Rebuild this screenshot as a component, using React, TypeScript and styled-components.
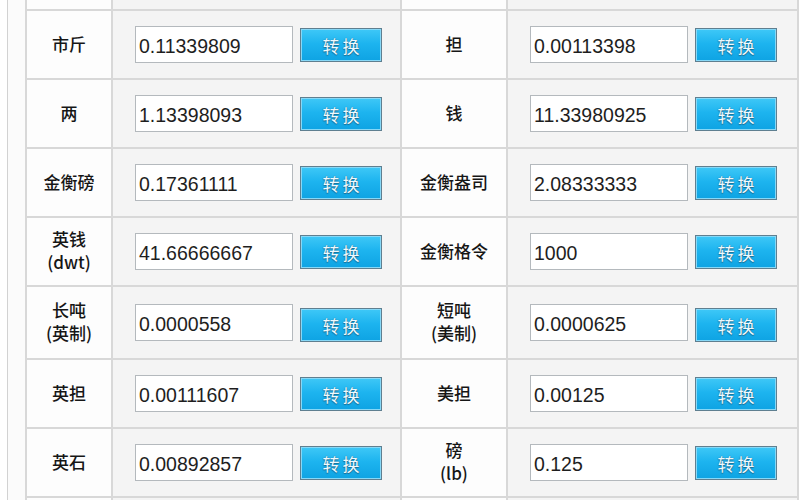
import { Fragment } from "react";
import styled, { createGlobalStyle } from "styled-components";

const GlobalStyle = createGlobalStyle`
  html, body {
    margin: 0;
    padding: 0;
    background: #ffffff;
  }
  body {
    font-family: "Noto Sans CJK SC", "Liberation Sans", sans-serif;
  }
`;

type Unit = { name: string[]; value: string };

const rows: { left: Unit; right: Unit }[] = [
  { left: { name: ["市斤"], value: "0.11339809" }, right: { name: ["担"], value: "0.00113398" } },
  { left: { name: ["两"], value: "1.13398093" }, right: { name: ["钱"], value: "11.33980925" } },
  { left: { name: ["金衡磅"], value: "0.17361111" }, right: { name: ["金衡盎司"], value: "2.08333333" } },
  { left: { name: ["英钱", "(dwt)"], value: "41.66666667" }, right: { name: ["金衡格令"], value: "1000" } },
  { left: { name: ["长吨", "(英制)"], value: "0.0000558" }, right: { name: ["短吨", "(美制)"], value: "0.0000625" } },
  { left: { name: ["英担"], value: "0.00111607" }, right: { name: ["美担"], value: "0.00125" } },
  { left: { name: ["英石"], value: "0.00892857" }, right: { name: ["磅", "(lb)"], value: "0.125" } },
];

const Page = styled.div`
  display: flex;
  width: 800px;
  height: 500px;
  overflow: hidden;
  background: #ffffff;
`;

const SideRule = styled.div`
  width: 7px;
  flex: none;
  border-right: 1px solid #d2d2d2;
`;

const Gutter = styled.div`
  width: 17px;
  flex: none;
  background: #fbfbfb;
`;

/* 9px sliver of the row above, seven full rows, then the start of the next one */
const Table = styled.div`
  display: grid;
  grid-template-columns: 84px 287px 104px 289px;
  grid-template-rows: 9px repeat(4, 67px) 71px 67px 67px 40px;
  gap: 2px;
  align-content: start;
  width: 770px;
  flex: none;
  background: #d8d8d8;
  border-left: 2px solid #d8d8d8;
  border-right: 2px solid #d8d8d8;
`;

const LabelCell = styled.div`
  display: flex;
  flex-direction: column;
  align-items: center;
  justify-content: center;
  padding-bottom: 3px;
  background: #fdfdfd;
  color: #161616;
  font-family: "Noto Sans CJK SC", "Liberation Sans", sans-serif;
  font-size: 17px;
  font-weight: 500;
  line-height: 23px;
  overflow: hidden;
`;

const ValueCell = styled.div`
  display: flex;
  align-items: center;
  gap: 7px;
  padding-left: 22px;
  background: #f4f4f4;
  overflow: hidden;
`;

const NumberBox = styled.div`
  box-sizing: border-box;
  width: 158px;
  height: 37px;
  padding: 4px 0 0 3px;
  display: flex;
  align-items: center;
  background: #ffffff;
  border: 1px solid #b4b9bd;
  color: #1e1e1e;
  font-family: "Liberation Sans", Arial, sans-serif;
  font-size: 19.5px;
`;

const ConvertButton = styled.div`
  box-sizing: border-box;
  align-self: flex-end;
  margin-bottom: 16px;
  width: 82px;
  height: 34px;
  display: flex;
  align-items: center;
  justify-content: center;
  border: 1px solid #5f7f90;
  box-shadow: inset 0 0 0 1px #86d8f7;
  background: linear-gradient(to bottom, #3fc8f7 0%, #1db4ef 45%, #0ea3e3 100%);
  color: #eefaff;
  font-family: "Noto Sans CJK SC", sans-serif;
  font-size: 17px;
  letter-spacing: 3px;
  padding-left: 3px;
  text-shadow: 0 0 1px #1a5d7f, 0 1px 1px #1a6f96;
`;

function Label({ lines }: { lines: string[] }) {
  return (
    <LabelCell>
      {lines.map((l) => (
        <span key={l}>{l}</span>
      ))}
    </LabelCell>
  );
}

function Value({ value }: { value: string }) {
  return (
    <ValueCell>
      <NumberBox>{value}</NumberBox>
      <ConvertButton>转换</ConvertButton>
    </ValueCell>
  );
}

export default function App() {
  return (
    <>
      <GlobalStyle />
      <Page>
        <SideRule />
        <Gutter />
        <Table>
          <LabelCell />
          <ValueCell />
          <LabelCell />
          <ValueCell />
          {rows.map((r, i) => (
            <Fragment key={i}>
              <Label lines={r.left.name} />
              <Value value={r.left.value} />
              <Label lines={r.right.name} />
              <Value value={r.right.value} />
            </Fragment>
          ))}
          <LabelCell />
          <ValueCell />
          <LabelCell />
          <ValueCell />
        </Table>
      </Page>
    </>
  );
}
